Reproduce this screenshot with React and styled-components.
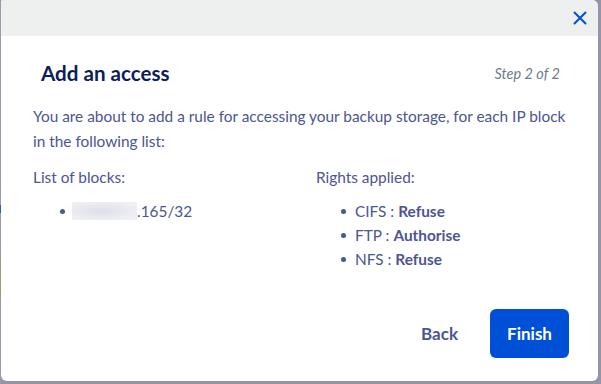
import React from "react";
import styled, { createGlobalStyle } from "styled-components";

const GlobalStyle = createGlobalStyle`
  html, body {
    margin: 0;
    padding: 0;
    background: #9395a6;
    font-family: Lato, "Open Sans", sans-serif;
  }
`;

const Backdrop = styled.div`
  width: 601px;
  height: 384px;
  padding-left: 1px;
  box-sizing: border-box;
  background: linear-gradient(
    to bottom,
    #9a9cab 0px,
    #9a9cab 205px,
    #2b5fb5 205px,
    #2b5fb5 213px,
    #9a9cab 213px,
    #9a9cab 258px,
    #a39a78 258px,
    #a39a78 300px,
    #9a9cab 300px
  );
  background-size: 1px 100%;
  background-repeat: no-repeat;
  background-color: #9395a6;
`;

const Modal = styled.div`
  width: 597px;
  height: 381px;
  background: #fff;
  border-radius: 2px 6px 6px 6px;
  overflow: hidden;
  display: flex;
  flex-direction: column;
`;

const TopBar = styled.div`
  height: 36px;
  background: #eef0ef;
  display: flex;
  align-items: center;
  justify-content: flex-end;
  padding-right: 11px;
  flex-shrink: 0;
`;

const CloseButton = styled.button`
  border: none;
  background: none;
  padding: 0;
  width: 14px;
  height: 14px;
  display: flex;
  cursor: pointer;
`;

const Body = styled.div`
  flex: 1;
  display: flex;
  flex-direction: column;
  padding: 23px 12px 0 32px;
  color: #4d5592;
`;

const HeadRow = styled.div`
  display: flex;
  justify-content: space-between;
  align-items: center;
  padding: 0 26px 0 8px;
`;

const Title = styled.h2`
  margin: 0;
  font-size: 20.6px;
  font-weight: 700;
  color: #0b1e5b;
  line-height: 28px;
`;

const Step = styled.span`
  font-size: 14.5px;
  font-style: italic;
  color: #6e7a8a;
`;

const Intro = styled.p`
  margin: 17px 0 0;
  font-size: 15.4px;
  line-height: 25px;
  max-width: 540px;
`;

const Columns = styled.div`
  display: grid;
  grid-template-columns: 283px 1fr;
  margin-top: 11px;
`;

const Label = styled.div`
  font-size: 15.4px;
  line-height: 25px;
`;

const List = styled.ul`
  list-style: none;
  margin: 9px 0 0;
  padding: 0 0 0 ${(p) => p.indent}px;
`;

const Item = styled.li`
  display: flex;
  align-items: center;
  font-size: 15.4px;
  line-height: 24px;
  height: 24px;
  &::before {
    content: "";
    width: 5px;
    height: 5px;
    border-radius: 50%;
    background: #4d5592;
    margin-right: ${(p) => p.gap || 9}px;
    flex-shrink: 0;
  }
  b {
    font-weight: 700;
    margin-left: 4px;
  }
`;

const Blurred = styled.span`
  display: inline-block;
  width: 65px;
  height: 18px;
  background: radial-gradient(ellipse at 45% 50%, #dcdde8 0%, #ecedf3 60%, #f1f2f6 100%);
`;

const Footer = styled.div`
  margin-top: auto;
  display: flex;
  justify-content: flex-end;
  align-items: center;
  gap: 22px;
  padding: 0 17px 23px 0;
`;

const BackButton = styled.button`
  border: none;
  background: none;
  font-family: inherit;
  font-size: 17px;
  font-weight: 700;
  color: #4d5592;
  padding: 0 10px;
  cursor: pointer;
`;

const FinishButton = styled.button`
  border: none;
  background: #0050d7;
  color: #fff;
  font-family: inherit;
  font-size: 17px;
  font-weight: 700;
  width: 79px;
  height: 49px;
  border-radius: 6px;
  cursor: pointer;
`;

export default function App() {
  return (
    <>
      <GlobalStyle />
      <Backdrop>
        <Modal>
          <TopBar>
            <CloseButton aria-label="Close">
              <svg width="14" height="14" viewBox="0 0 14 14">
                <path d="M1.5 1.5 L12.5 12.5 M12.5 1.5 L1.5 12.5" stroke="#0050d7" strokeWidth="2" strokeLinecap="round" />
              </svg>
            </CloseButton>
          </TopBar>
          <Body>
            <HeadRow>
              <Title>Add an access</Title>
              <Step>Step 2 of 2</Step>
            </HeadRow>
            <Intro>
              You are about to add a rule for accessing your backup storage, for each IP block in the following list:
            </Intro>
            <Columns>
              <div>
                <Label>List of blocks:</Label>
                <List indent={27}>
                  <Item gap={7}>
                    <Blurred />.165/32
                  </Item>
                </List>
              </div>
              <div>
                <Label>Rights applied:</Label>
                <List indent={25}>
                  <Item gap={9}>CIFS :<b>Refuse</b></Item>
                  <Item gap={9}>FTP :<b>Authorise</b></Item>
                  <Item gap={9}>NFS :<b>Refuse</b></Item>
                </List>
              </div>
            </Columns>
            <Footer>
              <BackButton>Back</BackButton>
              <FinishButton>Finish</FinishButton>
            </Footer>
          </Body>
        </Modal>
      </Backdrop>
    </>
  );
}
